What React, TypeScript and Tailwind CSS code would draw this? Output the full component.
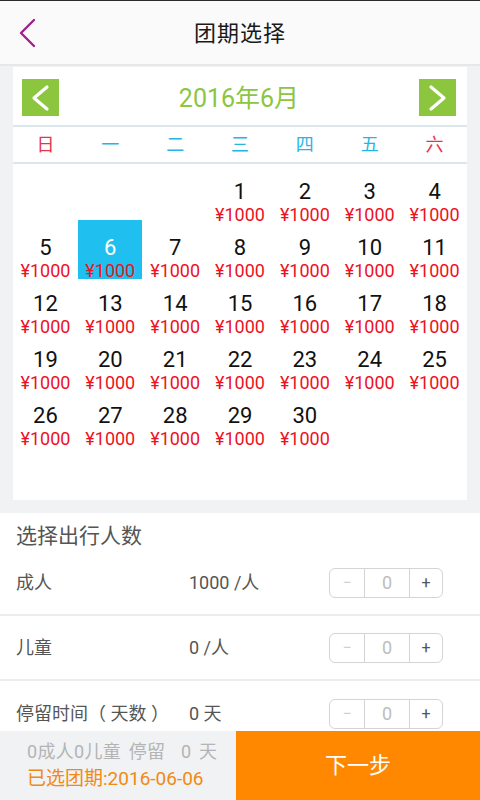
import React from "react";

const FONT = { fontFamily: 'Roboto, "Noto Sans CJK SC", "Noto Sans", sans-serif' };

const weekdays = [
  { t: "日", c: "text-[#e8334a]" },
  { t: "一", c: "text-[#27b6e3]" },
  { t: "二", c: "text-[#27b6e3]" },
  { t: "三", c: "text-[#27b6e3]" },
  { t: "四", c: "text-[#27b6e3]" },
  { t: "五", c: "text-[#27b6e3]" },
  { t: "六", c: "text-[#e8334a]" },
];

function Chevron({ dir, className }: { dir: "left" | "right"; className?: string }) {
  return (
    <svg width="37" height="37" viewBox="0 0 37 37" className={className}>
      {dir === "left" ? (
        <polyline points="25,8 12,19 25,30" fill="none" stroke="white" strokeWidth="3.2" strokeLinecap="round" strokeLinejoin="round" />
      ) : (
        <polyline points="12,8 25,19 12,30" fill="none" stroke="white" strokeWidth="3.2" strokeLinecap="round" strokeLinejoin="round" />
      )}
    </svg>
  );
}

function Stepper() {
  return (
    <div className="flex h-[30px] w-[114px] rounded-[6px] border border-[#d4d4d4] bg-white">
      <div className="flex w-[34px] items-center justify-center text-[16px] text-[#cfcfcf]">−</div>
      <div className="flex w-[46px] items-center justify-center border-x border-[#d4d4d4] text-[18px] text-[#bdbdbd]">0</div>
      <div className="flex flex-1 items-center justify-center text-[16px] text-[#555]">+</div>
    </div>
  );
}

function PersonRow({ label, price, last }: { label: string; price: string; last?: boolean }) {
  return (
    <div className={`flex h-[65px] shrink-0 items-center pl-[16px] pr-[37px] ${last ? "" : "border-b-2 border-[#ececec]"}`}>
      <div className="w-[173px] text-[18px] leading-[24px] text-[#555]" style={{ whiteSpace: "pre" }}>{label}</div>
      <div className="flex-1 text-[18px] leading-[24px] text-[#555]">{price}</div>
      <Stepper />
    </div>
  );
}

export default function App() {
  const cells: (number | null)[] = [null, null, null];
  for (let d = 1; d <= 30; d++) cells.push(d);
  while (cells.length < 42) cells.push(null);

  return (
    <div className="flex h-[800px] w-[480px] flex-col overflow-hidden bg-[#f0f2f4]" style={FONT}>
      <div className="h-px shrink-0 bg-[#2a2a2a]" />
      {/* Header */}
      <div className="relative flex h-[65px] shrink-0 items-center justify-center border-b-2 border-[#e6e7e9] bg-[#fafafa]">
        <svg width="20" height="32" viewBox="0 0 20 32" className="absolute left-[17px] top-[16px]">
          <polyline points="17,3 4,16 17,29" fill="none" stroke="#a0228a" strokeWidth="2.4" strokeLinecap="round" strokeLinejoin="round" />
        </svg>
        <div className="pt-[2px] text-[22px] leading-[30px] tracking-[1px] text-[#1a1a1a]">团期选择</div>
      </div>

      <div className="flex flex-1 flex-col overflow-hidden">
        {/* Calendar card */}
        <div className="mx-[13px] mt-px shrink-0 bg-white">
          <div className="flex h-[58px] items-start justify-between pl-[9px] pr-[11px] pt-[12px]">
            <div className="bg-[#8cc63e]">
              <Chevron dir="left" />
            </div>
            <div className="pt-[5px] text-[25px] leading-[30px] text-[#8cc63e]">2016年6月</div>
            <div className="bg-[#8cc63e]">
              <Chevron dir="right" />
            </div>
          </div>
          <div className="grid h-[39px] grid-cols-7 items-center border-y-2 border-[#dce7ed]">
            {weekdays.map((w) => (
              <div key={w.t} className={`text-center text-[18px] leading-[24px] ${w.c}`}>
                {w.t}
              </div>
            ))}
          </div>
          <div className="grid grid-cols-7">
            {cells.map((d, i) => {
              const sel = d === 6;
              return (
                <div key={i} className="relative h-[56px]">
                  {sel && <div className="absolute left-0 right-px top-0 h-[59px] bg-[#1fbff0]" />}
                  {d !== null && (
                    <div className="relative flex flex-col items-center pt-[15px]">
                      <div className={`text-[22px] leading-[26px] ${sel ? "text-white" : "text-[#111]"}`}>{d}</div>
                      <div className="text-[18px] leading-[20px] text-[#ee1122]">¥1000</div>
                    </div>
                  )}
                </div>
              );
            })}
          </div>
        </div>

        {/* People selection */}
        <div className="mt-[13px] flex flex-1 flex-col bg-white">
          <div className="h-[38px] shrink-0 pl-[16px] pt-[9px] text-[21px] leading-[28px] text-[#555]">选择出行人数</div>
          <PersonRow label="成人" price="1000 /人" />
          <PersonRow label="儿童" price="0 /人" />
          <PersonRow label="停留时间（ 天数 ）" price="0 天" last />
        </div>
      </div>

      {/* Bottom bar */}
      <div className="flex h-[69px] shrink-0">
        <div className="flex w-[236px] flex-col justify-center bg-[#f0f2f4] pl-[27px]">
          <div className="text-[18px] leading-[24px] tracking-[0.3px] text-[#b4b4b4] [word-spacing:3px]" style={{ whiteSpace: "pre" }}>0成人0儿童 停留  0 天</div>
          <div className="mt-[3px] text-[19px] leading-[24px] text-[#f08a13]">已选团期:2016-06-06</div>
        </div>
        <div className="flex flex-1 items-center justify-center bg-[#ff8800] text-[22px] leading-[30px] text-white">下一步</div>
      </div>
    </div>
  );
}
